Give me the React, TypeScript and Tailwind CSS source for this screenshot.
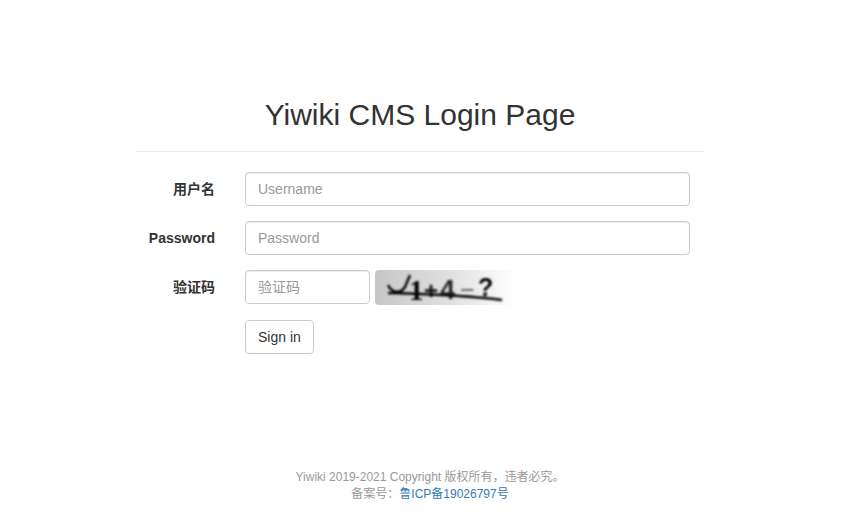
const font = "font-['Liberation_Sans','Noto_Sans_CJK_SC',sans-serif]";

function CaptchaImage() {
  return (
    <div className="w-[140px] h-[35px] ml-[5px] rounded-[4px] overflow-hidden bg-gradient-to-r from-[#c6c6c6] via-[#e4e4e4] via-60% to-white">
      <svg width="140" height="35" viewBox="0 0 140 35">
        <defs>
          <filter id="soft">
            <feGaussianBlur stdDeviation="0.9" />
          </filter>
        </defs>
        <g filter="url(#soft)">
          <text x="34" y="30" fontFamily="Liberation Serif" fontSize="29" fontWeight="700" fill="#000">1</text>
          <text x="49" y="29" fontFamily="Liberation Sans" fontSize="24" fontWeight="700" fill="#111">+</text>
          <text x="65" y="29" fontFamily="Liberation Sans" fontSize="27" fontWeight="700" fill="#222">4</text>
          <text x="85" y="31" fontFamily="Liberation Sans" fontSize="25" fontWeight="400" fill="#666">=</text>
          <text x="103" y="26" fontFamily="Liberation Sans" fontSize="25" fontWeight="700" fill="#000">?</text>
          <path d="M13 15 C16 22 25 25 30 17 L35 5" fill="none" stroke="#000" strokeWidth="2.4" />
          <path d="M13 23 C50 24 90 25 127 30" fill="none" stroke="#000" strokeWidth="2.6" />
        </g>
      </svg>
    </div>
  );
}

function Row({ label, children }: { label: string; children: React.ReactNode }) {
  return (
    <div className="flex items-start mb-[15px]">
      <label className="w-[80px] shrink-0 mr-[30px] leading-[34px] text-right text-[14px] font-bold text-[#333]">
        {label}
      </label>
      {children}
    </div>
  );
}

const inputClass =
  "h-[34px] px-3 text-[14px] text-[#555] bg-white border border-[#ccc] rounded-[4px] shadow-[inset_0_1px_1px_rgba(0,0,0,0.075)] placeholder:text-[#999] outline-none";

export default function App() {
  return (
    <div className={`${font} w-[840px] h-[527px] bg-white flex flex-col items-center`}>
      <div className="w-[570px] mt-[98px]">
        <h1 className="text-[30px] leading-[33px] text-center text-[#333] font-normal pb-[20px] border-b border-[#eee]">
          Yiwiki CMS Login Page
        </h1>
        <form className="mt-[20px]">
          <Row label="用户名">
            <input placeholder="Username" className={`${inputClass} w-[445px]`} />
          </Row>
          <Row label="Password">
            <input placeholder="Password" className={`${inputClass} w-[445px]`} />
          </Row>
          <Row label="验证码">
            <input placeholder="验证码" className={`${inputClass} w-[125px]`} />
            <CaptchaImage />
          </Row>
          <div className="pl-[110px] mt-[15px]">
            <button
              type="button"
              className="h-[34px] px-3 text-[14px] text-[#333] bg-white border border-[#ccc] rounded-[4px]"
            >
              Sign in
            </button>
          </div>
        </form>
      </div>
      <footer className="mt-[115px] ml-[20px] text-center text-[12px] leading-[17px] text-[#999]">
        <p>Yiwiki 2019-2021 Copyright 版权所有，违者必究。</p>
        <p>
          备案号：<a className="text-[#337ab7]">鲁ICP备19026797号</a>
        </p>
      </footer>
    </div>
  );
}
